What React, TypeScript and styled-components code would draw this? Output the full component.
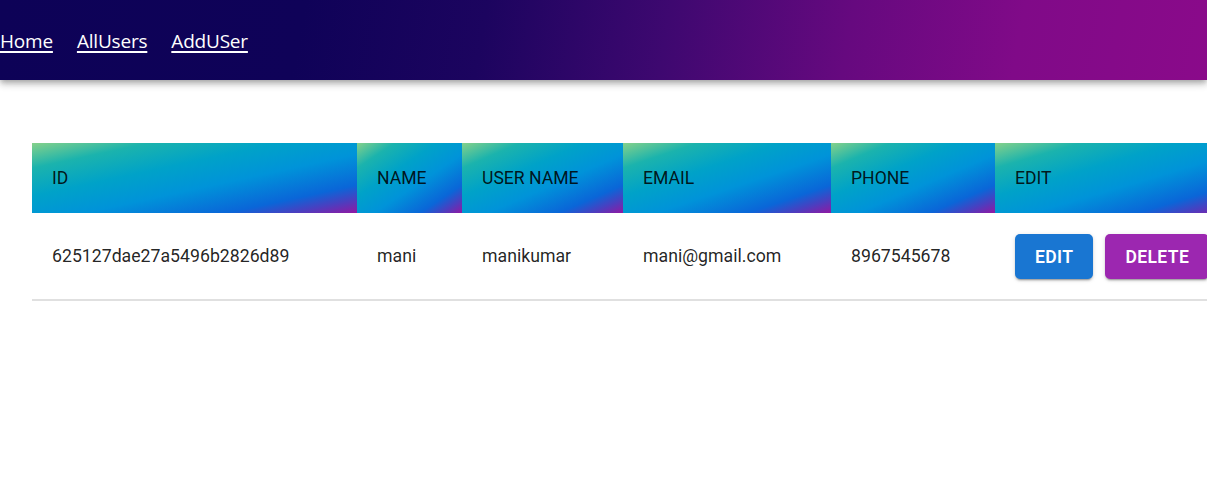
import React from "react";
import styled, { createGlobalStyle } from "styled-components";

const Global = createGlobalStyle`
  html, body { margin: 0; padding: 0; background: #fff; overflow: hidden; }
  body { font-family: Roboto, "Liberation Sans", sans-serif; }
`;

const AppBar = styled.header`
  height: 80px;
  display: flex;
  align-items: center;
  background: linear-gradient(100deg, #0d0257 0%, #0f0258 25%, #1c045f 40%, #3e0870 55%, #66097f 70%, #800a88 84%, #8a0a8a 100%);
  box-shadow: 0 2.5px 5px -1px rgba(0,0,0,0.2), 0 5px 6px 0 rgba(0,0,0,0.14), 0 1px 12px 0 rgba(0,0,0,0.12);
  position: relative;
  z-index: 1;
`;

const NavLinks = styled.nav`
  display: flex;
  gap: 24px;
  padding-left: 0;
  margin-top: 2px;
`;

const NavLink = styled.a`
  color: #fff;
  font-family: "Open Sans", "Noto Sans", sans-serif;
  font-size: 19px;
  text-decoration: underline;
  text-underline-offset: 3px;
  text-decoration-thickness: 1.5px;
  letter-spacing: -0.2px;
`;

const Main = styled.main`
  padding: 63px 0 0 32px;
`;

const Table = styled.table`
  border-collapse: collapse;
  table-layout: fixed;
  width: 1200px;
`;

const HeadCell = styled.th`
  text-align: left;
  font-weight: 400;
  font-size: 17.6px;
  line-height: 30px;
  padding: 20px;
  color: rgba(0, 0, 0, 0.87);
  background: linear-gradient(to bottom right, #85d18a 0%, #1bb3ad 18%, #00a2c8 38%, #0093d9 58%, #0a66d8 80%, #4a3fc0 90%, #9218a2 100%);
`;

const BodyCell = styled.td`
  font-size: 17.7px;
  line-height: 25px;
  padding: 21px 20px 20px;
  color: rgba(0, 0, 0, 0.87);
  border-bottom: 2px solid #e0e0e0;
  white-space: nowrap;
`;

const Actions = styled.div`
  display: flex;
  gap: 12px;
`;

const Button = styled.button<{ $tone: string }>`
  font-family: Roboto, "Liberation Sans", sans-serif;
  font-weight: 600;
  font-size: 17.5px;
  letter-spacing: 0.4px;
  line-height: 30px;
  text-transform: uppercase;
  color: #fff;
  background: ${(p) => p.$tone};
  border: none;
  border-radius: 5px;
  padding: 7.5px 20px;
  box-shadow: 0 3px 1px -2px rgba(0,0,0,0.2), 0 2px 2px 0 rgba(0,0,0,0.14), 0 1px 5px 0 rgba(0,0,0,0.12);
  white-space: nowrap;
`;

const widths = [325, 105, 161, 208, 164, 237];
const heads = ["ID", "NAME", "USER NAME", "EMAIL", "PHONE", "EDIT"];

export default function App() {
  return (
    <>
      <Global />
      <AppBar>
        <NavLinks>
          <NavLink href="#">Home</NavLink>
          <NavLink href="#">AllUsers</NavLink>
          <NavLink href="#">AddUSer</NavLink>
        </NavLinks>
      </AppBar>
      <Main>
        <Table>
          <colgroup>
            {widths.map((w, i) => (
              <col key={i} style={{ width: w }} />
            ))}
          </colgroup>
          <thead>
            <tr>
              {heads.map((h) => (
                <HeadCell key={h}>{h}</HeadCell>
              ))}
            </tr>
          </thead>
          <tbody>
            <tr>
              <BodyCell>625127dae27a5496b2826d89</BodyCell>
              <BodyCell>mani</BodyCell>
              <BodyCell>manikumar</BodyCell>
              <BodyCell>mani@gmail.com</BodyCell>
              <BodyCell>8967545678</BodyCell>
              <BodyCell>
                <Actions>
                  <Button $tone="#1976d2">Edit</Button>
                  <Button $tone="#9c27b0">Delete</Button>
                </Actions>
              </BodyCell>
            </tr>
          </tbody>
        </Table>
      </Main>
    </>
  );
}
